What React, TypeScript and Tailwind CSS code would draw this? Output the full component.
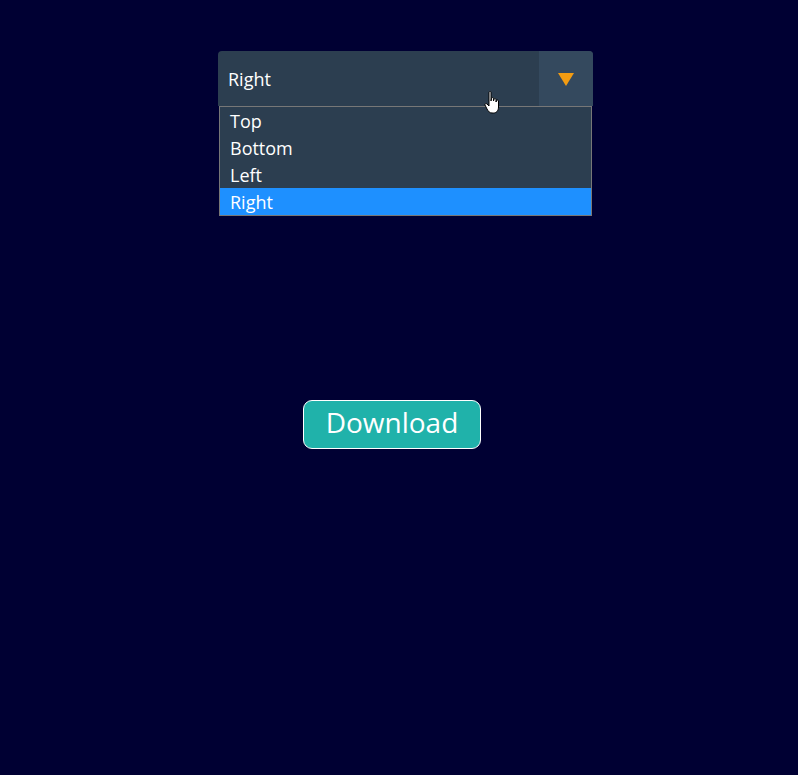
const options = ["Top", "Bottom", "Left", "Right"];

export default function App() {
  const selected = "Right";
  return (
    <div
      className="min-h-[775px] w-full bg-[#000033] relative"
      style={{ fontFamily: '"Open Sans", "Noto Sans", sans-serif' }}
    >
      <div className="pt-[51px] pl-[218px]">
        <div className="relative w-[375px]">
          <div className="flex h-[55px] rounded-t-[4px] overflow-hidden bg-[#2c3e50]">
            <div className="flex-1 flex items-center pl-[10px] pt-[2px] text-[18px] text-white">
              {selected}
            </div>
            <div className="w-[54px] flex items-center justify-center bg-[#34495e]">
              <svg width="16" height="14" viewBox="0 0 16 14">
                <polygon points="0,1 16,1 8,14" fill="#f39c12" />
              </svg>
            </div>
          </div>
          <ul className="ml-px w-[373px] border border-[#777] bg-[#2c3e50]">
            {options.map((o) => (
              <li
                key={o}
                className={
                  "h-[27px] flex items-center pl-[10px] pt-[2px] text-[18px] text-white " +
                  (o === selected ? "bg-[#1e90ff]" : "")
                }
              >
                {o}
              </li>
            ))}
          </ul>
          <svg
            className="absolute left-[266px] top-[39px]"
            width="18"
            height="26"
            viewBox="0 0 18 26"
          >
            <path
              d="M5 2.5 C5 1.2 7 1.2 7 2.5 L7 11 L7.5 8.5 C7.5 7.3 9.5 7.3 9.5 8.5 L9.5 11 L10 9.5 C10 8.3 12 8.3 12 9.5 L12 12 L12.5 10.8 C12.5 9.8 14.5 9.8 14.5 11 L14.5 17 C14.5 20.5 12.5 23 9.5 23 L8 23 C5.5 23 4.5 21.5 3 19 L1 15 C0.5 13.8 2 13 3 14 L5 16 Z"
              fill="white"
              stroke="black"
              strokeWidth="1"
            />
          </svg>
        </div>
      </div>
      <div className="pt-[184px] pl-[303px]">
        <button className="h-[49px] w-[178px] rounded-[9px] border border-white bg-[#20b2aa] pb-[5px] text-white text-[28px] leading-none">
          Download
        </button>
      </div>
    </div>
  );
}
